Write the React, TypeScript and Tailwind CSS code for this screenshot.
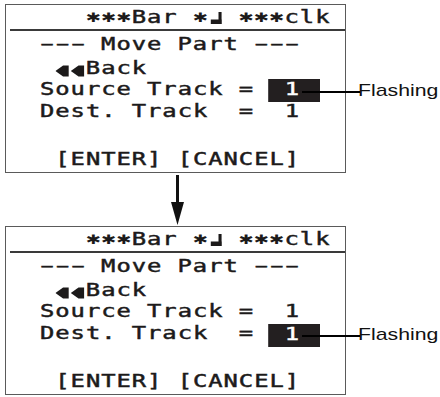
import React from "react";

const lcd =
  "font-['DejaVu_Sans_Mono','Liberation_Mono',monospace] text-[17px] tracking-[0.69px] whitespace-pre text-[#1c1a1a] [-webkit-text-stroke:0.45px_#1c1a1a]";

function Row({
  children,
  className = "",
}: {
  children: React.ReactNode;
  className?: string;
}) {
  return (
    <div className={`h-[21px] pl-[34px] ${className}`}>
      <div className={`flex items-start origin-left scale-x-[1.4] leading-[21px] ${lcd}`}>
        {children}
      </div>
    </div>
  );
}

function Cell({ children }: { children: React.ReactNode }) {
  return (
    <span className="inline-flex h-[21px] w-[10.92px] items-center justify-center tracking-normal">
      {children}
    </span>
  );
}

function Dashes() {
  return (
    <>
      {[0, 1, 2].map((i) => (
        <Cell key={i}>
          <span className="inline-block scale-x-[0.78]">–</span>
        </Cell>
      ))}
    </>
  );
}

function Stars({ n }: { n: number }) {
  return (
    <>
      {Array.from({ length: n }).map((_, i) => (
        <Cell key={i}>
          <span className="text-[13px] [-webkit-text-stroke:0px] font-['DejaVu_Sans',sans-serif]">
            ✱
          </span>
        </Cell>
      ))}
    </>
  );
}

function RewindArrow() {
  return (
    <Cell>
      <svg width="10" height="12" viewBox="0 0 10 12" className="mt-[4px]">
        <polygon points="0,6 5.5,0.5 9.5,0.5 9.5,11.5 5.5,11.5" fill="#1c1a1a" />
      </svg>
    </Cell>
  );
}

function Note() {
  return (
    <Cell>
      <svg width="10" height="14" viewBox="0 0 10 14" className="mt-[1px]">
        <rect x="6.5" y="1" width="2.2" height="12" fill="#1c1a1a" />
        <rect x="1" y="8.5" width="7.6" height="4.5" fill="#1c1a1a" />
      </svg>
    </Cell>
  );
}

function Highlight({ offset = 0 }: { offset?: number }) {
  return (
    <span
      className={`inline-block h-[23px] bg-[#231f20] pr-[3.5px] -ml-[1px] pl-[1px] text-white [-webkit-text-stroke:0.45px_#ffffff] ${
        offset ? "mt-[1px]" : ""
      }`}
    >
      {" 1 "}
    </span>
  );
}

function Panel({ which }: { which: "source" | "dest" }) {
  const src = which === "source";
  return (
    <div className="relative flex items-start">
      <div className="h-[169px] w-[341px] border border-[#5a5a5a] bg-white">
        <Row className="mt-[2px]">
          <span>{"   "}</span>
          <Stars n={3} />
          <span>{"Bar "}</span>
          <Stars n={1} />
          <Note />
          <span>{" "}</span>
          <Stars n={3} />
          <span>clk</span>
        </Row>
        <div className="ml-[4px] mt-[1px] h-[2px] bg-[#3a3a3a]" />
        <Row className="mt-[3px]">
          <Dashes />
          <span>{" Move Part "}</span>
          <Dashes />
        </Row>
        <Row className="mt-[3px]">
          <span> </span>
          <RewindArrow />
          <RewindArrow />
          <span>Back</span>
        </Row>
        <Row>
          <span>{"Source Track = "}</span>
          {src ? <Highlight /> : <span>{" 1"}</span>}
        </Row>
        <Row className="mt-[1px]">
          <span>{"Dest. Track  = "}</span>
          {src ? <span>{" 1"}</span> : <Highlight offset={1} />}
        </Row>
        <Row className="mt-[27px]">
          <span>{" [ENTER] [CANCEL]"}</span>
        </Row>
      </div>
      <div className={`ml-[12px] ${src ? "mt-[78px]" : "mt-[100px]"}`}>
        <div className="origin-left scale-x-125 whitespace-pre font-['Liberation_Sans',Arial,sans-serif] text-[17px] leading-[18px] text-[#111]">
          Flashing
        </div>
      </div>
      <div
        className={`absolute left-[297px] h-[2px] w-[58px] bg-black ${
          src ? "top-[87px]" : "top-[109px]"
        }`}
      />
    </div>
  );
}

export default function App() {
  return (
    <div className="h-[397px] w-[440px] overflow-hidden bg-white pl-[5px] pt-[4px]">
      <Panel which="source" />
      <svg width="14" height="53" viewBox="0 0 14 53" className="ml-[166px] block">
        <rect x="5" y="2" width="3" height="28" fill="#111" />
        <polygon points="0,29 13,29 6.5,52" fill="#111" />
      </svg>
      <Panel which="dest" />
    </div>
  );
}
